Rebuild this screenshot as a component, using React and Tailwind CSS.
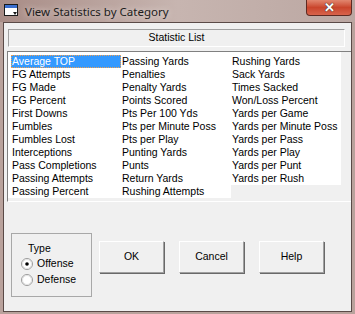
import React from "react";

const col1 = [
  "Average TOP",
  "FG Attempts",
  "FG Made",
  "FG Percent",
  "First Downs",
  "Fumbles",
  "Fumbles Lost",
  "Interceptions",
  "Pass Completions",
  "Passing Attempts",
  "Passing Percent",
];
const col2 = [
  "Passing Yards",
  "Penalties",
  "Penalty Yards",
  "Points Scored",
  "Pts Per 100 Yds",
  "Pts per Minute Poss",
  "Pts per Play",
  "Punting Yards",
  "Punts",
  "Return Yards",
  "Rushing Attempts",
];
const col3 = [
  "Rushing Yards",
  "Sack Yards",
  "Times Sacked",
  "Won/Loss Percent",
  "Yards per Game",
  "Yards per Minute Poss",
  "Yards per Pass",
  "Yards per Play",
  "Yards per Punt",
  "Yards per Rush",
];

function WinIcon() {
  return (
    <svg width="15" height="13" viewBox="0 0 15 13">
      <rect x="0.5" y="0.5" width="13" height="11" fill="#fff" stroke="#1a1a1a" />
      <rect x="1" y="1" width="12" height="3" fill="#3b6fd0" />
      <path d="M9 8 L13 8 L11 11 Z" fill="#1a1a1a" />
    </svg>
  );
}

function Radio({ checked }) {
  return (
    <svg width="12" height="12" viewBox="0 0 12 12">
      <circle cx="6" cy="6" r="5.5" fill="#fff" stroke="#9a9a9a" />
      <circle cx="6" cy="6" r="4.5" fill="none" stroke="#e2e2e2" />
      {checked && <circle cx="6" cy="6" r="1.8" fill="#000" />}
    </svg>
  );
}

function Btn({ label }) {
  return (
    <div className="w-[65px] h-[32px] flex items-center justify-center bg-[#f0f0f0] border border-white border-r-[#a0a0a0] border-b-[#a0a0a0] shadow-[1px_1px_0_#696969]">
      <span>{label}</span>
    </div>
  );
}

function Column({ items, first }) {
  return (
    <div className={`flex flex-col w-[110px] bg-white pt-[3px] self-start ${first ? "pl-[3px] w-[113px]" : ""}`}>
      {items.map((it, i) => (
        <div
          key={it}
          className={`h-[13px] leading-[13px] pl-[1px] whitespace-nowrap ${
            first && i === 0
              ? "bg-[#3399ff] text-white outline outline-1 outline-dotted outline-[#f0a050] -outline-offset-1"
              : "text-black"
          }`}
        >
          {it}
        </div>
      ))}
    </div>
  );
}

export default function App() {
  return (
    <div
      className="w-[355px] h-[314px] flex flex-col bg-[#b9a29c] overflow-hidden text-[10.5px]"
      style={{ fontFamily: '"Liberation Sans", Arial, sans-serif' }}
    >
      <div className="h-[22px] flex items-start bg-gradient-to-r from-[#a88c86] via-[#c7b5b0] to-[#bba7a2]">
        <div className="mt-[4px] ml-[4px]">
          <WinIcon />
        </div>
        <div
          className="ml-[6px] mt-[3px] text-[11.5px] text-[#1c1c1c] [text-shadow:0_0_6px_#efe6e3]"
          style={{ fontFamily: '"Noto Sans", "Liberation Sans", sans-serif' }}
        >
          View Statistics by Category
        </div>
        <div className="flex-1" />
        <div className="mr-[3px] w-[46px] h-[16px] rounded-b-[4px] border border-t-0 border-[#5e2a22] bg-gradient-to-b from-[#e1866f] via-[#c9452c] to-[#d8634b] flex items-center justify-center">
          <span className="text-white font-bold text-[13px] leading-[13px] [text-shadow:0_0_1px_#333,0_0_1px_#333]">
            ✕
          </span>
        </div>
      </div>

      <div className="flex-1 pl-[3px] pr-[3px] pb-[2px]">
        <div className="h-full border border-[#5a4a47] bg-[#f0f0f0] flex flex-col">
          <div className="ml-[4px] mt-[6px] w-[337px] h-[18px] border border-[#a0a0a0] border-r-white border-b-white flex items-center justify-center text-black">
            Statistic List
          </div>

          <div className="ml-[3px] mt-[4px] h-[151px] border-l border-t border-[#808080] border-b border-b-white flex">
            <Column items={col1} first />
            <Column items={col2} />
            <Column items={col3} />
          </div>

          <div className="flex items-start mt-[31px] ml-[7px] text-black">
            <div className="w-[81px] h-[64px] border border-[#a8a8a8] pt-[7px] pl-[9px]">
              <div className="ml-[7px] h-[15px] leading-[15px]">Type</div>
              <div className="flex items-center h-[16px] gap-[4px]">
                <Radio checked />
                <span>Offense</span>
              </div>
              <div className="flex items-center h-[16px] gap-[4px]">
                <Radio />
                <span>Defense</span>
              </div>
            </div>
            <div className="flex gap-[15px] ml-[7px] mt-[8px]">
              <Btn label="OK" />
              <Btn label="Cancel" />
              <Btn label="Help" />
            </div>
          </div>
        </div>
      </div>
    </div>
  );
}
